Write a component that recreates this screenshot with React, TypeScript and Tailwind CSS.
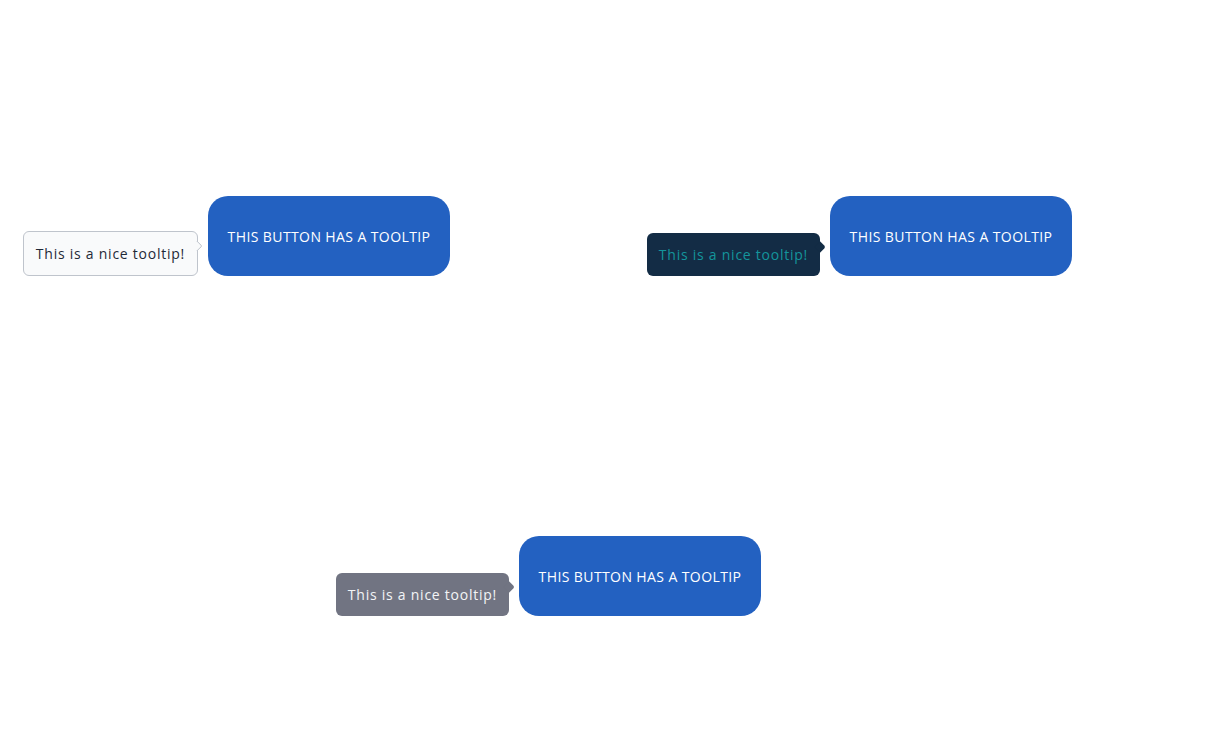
import { ReactNode } from "react";

type Variant = "light" | "dark" | "gray";

const tipStyles: Record<Variant, { box: string; arrow: string }> = {
  light: {
    box: "bg-[#f9fafb] border border-[#bfc4cc] text-[#1f2937] h-[45px]",
    arrow: "bg-[#f9fafb] border-t border-r border-[#bfc4cc]",
  },
  dark: {
    box: "bg-[#132c45] text-[#14959c] h-[43px]",
    arrow: "bg-[#132c45]",
  },
  gray: {
    box: "bg-[#717482] text-[#f3f4f6] h-[43px]",
    arrow: "bg-[#717482]",
  },
};

function Tooltip({ variant, children }: { variant: Variant; children: ReactNode }) {
  const s = tipStyles[variant];
  return (
    <div
      className={`absolute right-[calc(100%+10px)] bottom-0 flex items-center whitespace-nowrap rounded-md px-3 text-sm tracking-[0.75px] ${s.box}`}
    >
      <span className="pt-px">{children}</span>
      <span
        className={`absolute -right-[4px] top-[10px] h-[8px] w-[8px] rotate-45 rounded-tr-[2px] ${s.arrow}`}
      />
    </div>
  );
}

function TipButton({ variant }: { variant: Variant }) {
  return (
    <div className="relative">
      <Tooltip variant={variant}>This is a nice tooltip!</Tooltip>
      <button className="flex h-20 w-[242px] items-center justify-center rounded-[20px] bg-[#2361c1] pt-0.5 text-sm uppercase tracking-[0.4px] text-white">
        This button has a tooltip
      </button>
    </div>
  );
}

export default function App() {
  return (
    <div
      className="h-[746px] w-full bg-white"
      style={{ fontFamily: '"Open Sans", sans-serif' }}
    >
      <div className="flex flex-col pt-[196px]">
        <div className="flex gap-[380px] pl-[208px]">
          <TipButton variant="light" />
          <TipButton variant="dark" />
        </div>
        <div className="mt-[260px] flex pl-[519px]">
          <TipButton variant="gray" />
        </div>
      </div>
    </div>
  );
}
